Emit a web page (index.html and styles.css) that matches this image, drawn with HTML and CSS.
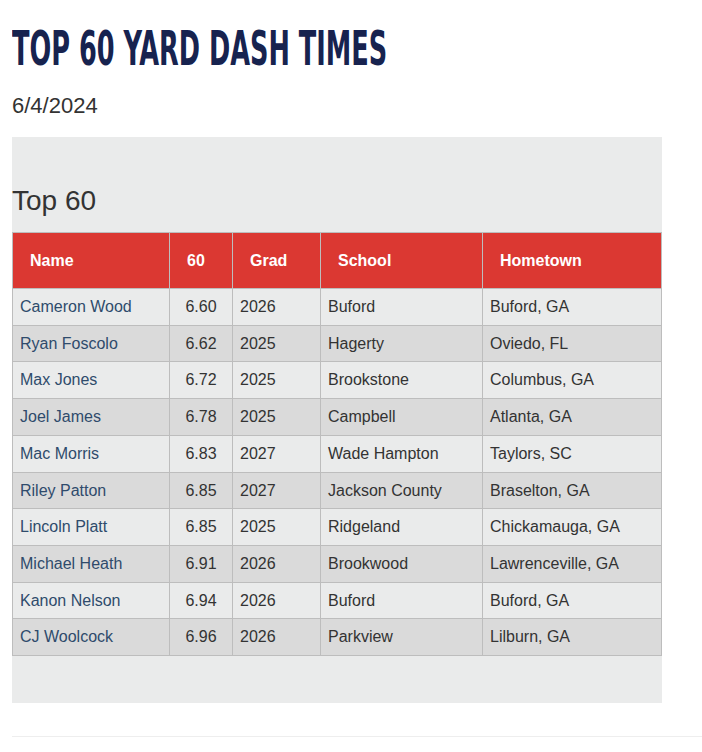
FILE: index.html
```html
<!DOCTYPE html>
<html>
<head>
<meta charset="utf-8">
<link rel="stylesheet" href="styles.css">
</head>
<body>
<div class="page">
  <h1 class="title"><span class="title-text">TOP 60 YARD DASH TIMES</span></h1>
  <p class="date">6/4/2024</p>
  <section class="panel">
    <h2 class="panel-title">Top 60</h2>
    <table class="times">
      <thead>
        <tr><th class="c-name">Name</th><th class="c-time">60</th><th class="c-grad">Grad</th><th class="c-school">School</th><th class="c-home">Hometown</th></tr>
      </thead>
      <tbody>
        <tr><td><a href="#">Cameron Wood</a></td><td class="num">6.60</td><td>2026</td><td>Buford</td><td>Buford, GA</td></tr>
        <tr><td><a href="#">Ryan Foscolo</a></td><td class="num">6.62</td><td>2025</td><td>Hagerty</td><td>Oviedo, FL</td></tr>
        <tr><td><a href="#">Max Jones</a></td><td class="num">6.72</td><td>2025</td><td>Brookstone</td><td>Columbus, GA</td></tr>
        <tr><td><a href="#">Joel James</a></td><td class="num">6.78</td><td>2025</td><td>Campbell</td><td>Atlanta, GA</td></tr>
        <tr><td><a href="#">Mac Morris</a></td><td class="num">6.83</td><td>2027</td><td>Wade Hampton</td><td>Taylors, SC</td></tr>
        <tr><td><a href="#">Riley Patton</a></td><td class="num">6.85</td><td>2027</td><td>Jackson County</td><td>Braselton, GA</td></tr>
        <tr><td><a href="#">Lincoln Platt</a></td><td class="num">6.85</td><td>2025</td><td>Ridgeland</td><td>Chickamauga, GA</td></tr>
        <tr><td><a href="#">Michael Heath</a></td><td class="num">6.91</td><td>2026</td><td>Brookwood</td><td>Lawrenceville, GA</td></tr>
        <tr><td><a href="#">Kanon Nelson</a></td><td class="num">6.94</td><td>2026</td><td>Buford</td><td>Buford, GA</td></tr>
        <tr><td><a href="#">CJ Woolcock</a></td><td class="num">6.96</td><td>2026</td><td>Parkview</td><td>Lilburn, GA</td></tr>
      </tbody>
    </table>
  </section>
  <hr class="rule">
</div>
</body>
</html>
```

FILE: styles.css
```css
html, body {
  margin: 0;
  padding: 0;
  background: #ffffff;
}
body {
  font-family: "Liberation Sans", Arial, sans-serif;
  color: #333333;
}
.page {
  padding: 0 0 0 12px;
}
.title {
  margin: 0;
  padding-top: 20px;
  height: 56px;
  font-family: "DejaVu Sans", sans-serif;
  font-stretch: condensed;
  font-weight: bold;
  font-size: 48px;
  line-height: 56px;
  color: #17234f;
  white-space: nowrap;
}
.title-text {
  display: inline-block;
  transform-origin: left center;
  transform: scaleX(0.593);
}
.date {
  margin: 16px 0 0 0;
  font-size: 22px;
  line-height: 28px;
  color: #333333;
}
.panel {
  margin-top: 17px;
  width: 650px;
  background: #eaebeb;
  padding: 46px 0 47px 0;
}
.panel-title {
  margin: 0 0 14px 0;
  font-weight: normal;
  font-size: 28px;
  line-height: 35px;
  color: #333333;
}
.times {
  width: 650px;
  border-collapse: collapse;
  font-size: 16px;
}
.times th {
  background: #db3832;
  color: #ffffff;
  font-weight: bold;
  text-align: left;
  padding: 17px 16px 17px 17px;
  line-height: 21px;
  border: 1px solid #bdbdbd;
}
.times td {
  padding: 7px 7px;
  line-height: 21.7px;
  border: 1px solid #bdbdbd;
  color: #333333;
}
.times tbody tr:nth-child(odd) td {
  background: #eaebeb;
}
.times tbody tr:nth-child(even) td {
  background: #dadada;
}
.times td.num {
  text-align: center;
}
.times a {
  color: #2f4b6c;
  text-decoration: none;
}
.c-name { width: 157px; box-sizing: border-box; }
.c-time { width: 63px; box-sizing: border-box; }
.c-grad { width: 88px; box-sizing: border-box; }
.c-school { width: 162px; box-sizing: border-box; }
.c-home { box-sizing: border-box; }
.rule {
  margin: 33px 0 0 0;
  border: 0;
  border-top: 1px solid #eeeeee;
  height: 0;
}
```
